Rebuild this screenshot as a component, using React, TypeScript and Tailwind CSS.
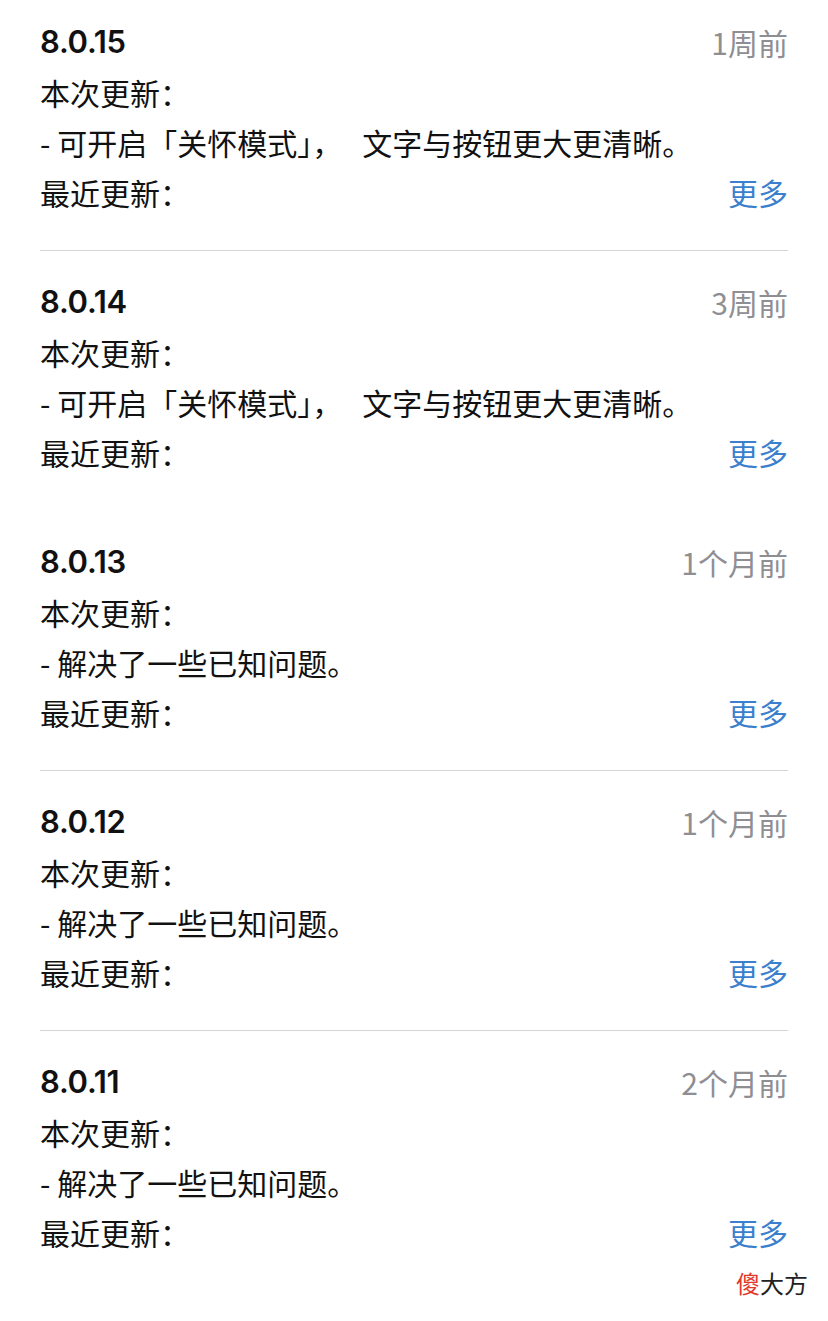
import React from 'react';

const releases = [
  { version: '8.0.15', time: '1周前', note: '- 可开启「关怀模式」，   文字与按钮更大更清晰。', divider: true },
  { version: '8.0.14', time: '3周前', note: '- 可开启「关怀模式」，   文字与按钮更大更清晰。', divider: false },
  { version: '8.0.13', time: '1个月前', note: '- 解决了一些已知问题。', divider: true },
  { version: '8.0.12', time: '1个月前', note: '- 解决了一些已知问题。', divider: true },
  { version: '8.0.11', time: '2个月前', note: '- 解决了一些已知问题。', divider: false },
];

const cjk = { fontFamily: '"Noto Sans CJK SC", "Noto Sans", sans-serif' };

const ReleaseItem = ({ item, first }) => {
  return (
    <div className={`${first ? 'pt-[17px]' : 'pt-[26px]'} pb-[33px] ${item.divider ? 'border-b border-[#d4d4d4]' : 'border-b border-transparent'}`}>
      <div className="flex justify-between items-center h-[50px]">
        <span className="text-[31px] font-semibold text-[#111] tracking-[-0.3px]" style={{ fontFamily: 'Inter, "Liberation Sans", sans-serif' }}>
          {item.version}
        </span>
        <span className="text-[30px] text-[#8e8e93]" style={cjk}>{item.time}</span>
      </div>
      <div className="h-[50px] flex items-center text-[30px] text-[#111]" style={cjk}>本次更新：</div>
      <div className="h-[50px] flex items-center text-[30px] text-[#111] whitespace-pre" style={cjk}>{item.note}</div>
      <div className="h-[50px] flex justify-between items-center text-[30px]" style={cjk}>
        <span className="text-[#111]">最近更新：</span>
        <span className="text-[#3b80cd]">更多</span>
      </div>
    </div>
  );
};

const App = () => {
  return (
    <div className="w-[828px] h-[1321px] bg-white overflow-hidden">
      <div className="ml-[40px] mr-[40px]">
        {releases.map((r, i) => (
          <ReleaseItem key={r.version} item={r} first={i === 0} />
        ))}
      </div>
      <div className="flex justify-end pr-[20px] -mt-[26px] text-[24px]" style={cjk}>
        <span className="text-[#e3392a]">傻</span>
        <span className="text-[#222]">大方</span>
      </div>
    </div>
  );
};

export default App;
